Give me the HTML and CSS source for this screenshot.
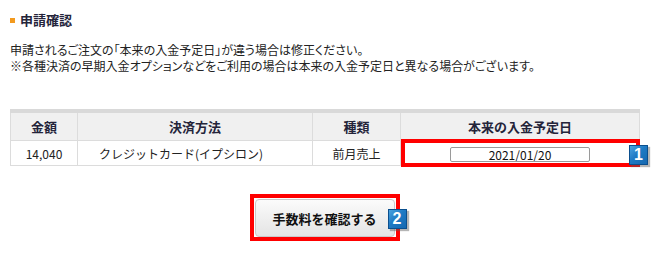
FILE: index.html
```html
<!DOCTYPE html>
<html lang="ja">
<head>
<meta charset="utf-8">
<link rel="stylesheet" href="styles.css">
</head>
<body>
<div class="page">
  <h2 class="title"><span class="square"></span>申請確認</h2>
  <div class="notes">
    <p>申請されるご注文の「本来の入金予定日」が違う場合は修正ください。</p>
    <p>※各種決済の早期入金オプションなどをご利用の場合は本来の入金予定日と異なる場合がございます。</p>
  </div>
  <table class="pay-table">
    <colgroup>
      <col class="c1"><col class="c2"><col class="c3"><col class="c4">
    </colgroup>
    <thead>
      <tr><th>金額</th><th>決済方法</th><th>種類</th><th>本来の入金予定日</th></tr>
    </thead>
    <tbody>
      <tr>
        <td class="num">14,040</td>
        <td class="method">クレジットカード(イプシロン)</td>
        <td>前月売上</td>
        <td class="date-cell">
          <input class="date-input" type="text" value="2021/01/20" readonly>
          <span class="mark"></span>
          <span class="badge badge-1">1</span>
        </td>
      </tr>
    </tbody>
  </table>
  <div class="action">
    <div class="btn-mark">
      <button class="btn" type="button">手数料を確認する</button>
      <span class="badge badge-2">2</span>
    </div>
  </div>
</div>
</body>
</html>
```

FILE: styles.css
```css
html, body {
  margin: 0;
  padding: 0;
  background: #fff;
}
body {
  font-family: "Noto Sans CJK JP", "Noto Sans", sans-serif;
  color: #222;
  font-size: 12px;
}
.page {
  padding: 10px 15px 0 10px;
}
.title {
  display: flex;
  align-items: center;
  gap: 5px;
  margin: 0;
  font-size: 13px;
  font-weight: bold;
  line-height: 20px;
  color: #24243a;
}
.square {
  width: 5px;
  height: 5px;
  background: #f39a1e;
}
.notes {
  margin-top: 12px;
  line-height: 16px;
  font-feature-settings: "palt";
}
.notes p {
  margin: 0;
}
.pay-table {
  margin-top: 35px;
  width: 629px;
  border-collapse: collapse;
  table-layout: fixed;
  border-top: 4px solid #d9d9d9;
}
.c1 { width: 67px; }
.c2 { width: 235px; }
.c3 { width: 88px; }
.c4 { width: 239px; }
.pay-table th,
.pay-table td {
  border: 1px solid #dcdcdc;
  text-align: center;
  padding: 0;
}
.pay-table th {
  height: 27px;
  background: #f0f0f0;
  font-size: 13px;
  font-weight: bold;
  color: #24243a;
}
.pay-table td {
  height: 24px;
  font-size: 12px;
}
.pay-table td.method {
  padding-right: 28px;
}
.date-cell {
  position: relative;
}
.date-input {
  box-sizing: border-box;
  width: 140px;
  height: 15px;
  padding: 0;
  border: 1px solid #9a9a9a;
  border-radius: 2px;
  font-family: "Noto Sans CJK JP", sans-serif;
  font-size: 12px;
  line-height: 13px;
  text-align: center;
  color: #111;
  background: #fff;
  vertical-align: middle;
}
.mark {
  position: absolute;
  left: 0;
  right: -1px;
  top: -2px;
  bottom: -2px;
  border: 4px solid #f00;
  pointer-events: none;
}
.badge {
  position: absolute;
  box-sizing: border-box;
  width: 19px;
  height: 20px;
  border: 1px solid #0b4f8e;
  background: linear-gradient(135deg, #4aa3e0 0%, #1f7ac4 45%, #1668b0 100%);
  box-shadow: 2px 2px 1px rgba(90, 90, 90, 0.45);
  color: #fff;
  font-family: "Liberation Sans", Arial, sans-serif;
  font-weight: bold;
  font-size: 16px;
  line-height: 18px;
  text-align: center;
}
.badge-1 {
  right: -9px;
  top: 4px;
}
.action {
  width: 629px;
  display: flex;
  justify-content: center;
  margin-top: 28px;
}
.btn-mark {
  position: relative;
  border: 4px solid #f00;
  padding: 1px 1px 0 1px;
}
.btn {
  display: block;
  box-sizing: border-box;
  width: 140px;
  height: 38px;
  border: 1px solid #c9c9c9;
  border-radius: 4px;
  background: linear-gradient(#fbfbfb, #e4e4e4);
  font-family: "Noto Sans CJK JP", sans-serif;
  font-size: 13px;
  font-weight: bold;
  color: #111;
  padding: 0;
}
.badge-2 {
  right: -11px;
  top: 11px;
}
```
